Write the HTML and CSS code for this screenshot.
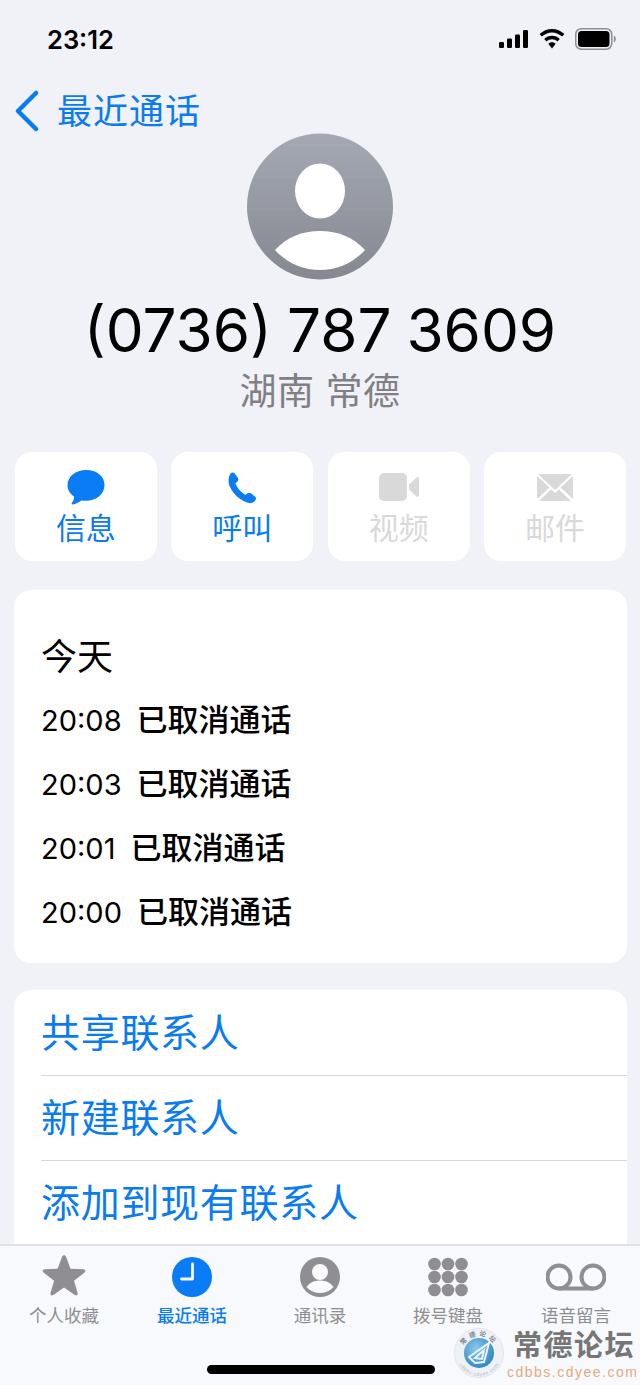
FILE: index.html
```html
<!DOCTYPE html>
<html lang="zh-CN">
<head>
    <meta charset="UTF-8">
    <meta name="viewport" content="width=device-width, initial-scale=1.0">
    <title>最近通话</title>
    <link rel="stylesheet" href="styles.css">
</head>
<body>
    <div class="phone">
        <div class="status-bar">
            <span class="clock">23:12</span>
            <div class="status-icons">
                <svg width="30" height="18" viewBox="0 0 30 18"><rect x="0" y="12" width="5" height="6" rx="1.2"/><rect x="8" y="8.5" width="5" height="9.5" rx="1.2"/><rect x="16" y="4.5" width="5" height="13.5" rx="1.2"/><rect x="24" y="0" width="5" height="18" rx="1.2"/></svg>
                <svg width="26" height="20" viewBox="0 0 26 20"><path d="M13 0C8.2 0 4 1.9 .6 5.1l2.3 2.5C5.7 5 9.1 3.4 13 3.4s7.3 1.6 10.1 4.2l2.3-2.5C22 1.9 17.800 0 13 0z"/><path d="M13 6.700c-3 0-5.700 1.200-7.800 3.200l2.400 2.500c1.500-1.400 3.300-2.200 5.400-2.200s3.900.8 5.400 2.200l2.400-2.500C18.700 7.900 16 6.700 13 6.700z"/><path d="M13 13.300c-1.500 0-2.800.6-3.700 1.500L13 19.500l3.700-4.700c-.9-.9-2.200-1.500-3.700-1.500z"/></svg>
                <svg width="41" height="22" viewBox="0 0 41 22"><rect x=".75" y=".75" width="36" height="20.500" rx="5.500" fill="none" stroke="#8e8e93" stroke-width="1.500"/><rect x="3" y="3" width="31.500" height="16" rx="3.500"/><path d="M38.800 7.500c1.200.4 2 1.900 2 3.500s-.8 3.100-2 3.500z" fill="#8e8e93"/></svg>
            </div>
        </div>

        <div class="nav-row">
            <svg class="chevron" width="26" height="42" viewBox="0 0 26 42"><path d="M22 3 4 21l18 18" fill="none" stroke="#0a7cf0" stroke-width="4.500" stroke-linecap="round" stroke-linejoin="round"/></svg>
            <span class="back-label">最近通话</span>
        </div>

        <div class="contact-head">
            <svg class="avatar" width="146" height="147" viewBox="0 0 146 147">
                <defs>
                    <linearGradient id="avatarFill" x1="0" y1="0" x2="0" y2="1">
                        <stop offset="0" stop-color="#a5a9b3"/>
                        <stop offset="1" stop-color="#858891"/>
                    </linearGradient>
                </defs>
                <circle cx="73" cy="73.500" r="73" fill="url(#avatarFill)"/>
                <ellipse cx="73" cy="58" rx="25" ry="27.500" fill="#fff"/>
                <path d="M28 117C40 104 55 98 73 98S106 104 118 117C106 130 90 137 73 137S40 130 28 117z" fill="#fff"/>
            </svg>
            <h1 class="phone-number">(0736) 787 3609</h1>
            <p class="location">湖南 常德</p>
        </div>

        <div class="actions">
            <div class="action">
                <svg width="40" height="36" viewBox="0 0 40 36"><path d="M20 1C9.500 1 1.500 7.700 1.500 16c0 4.700 2.600 8.800 6.500 11.500.5 2-1 5-2.300 6.800-.4.600 0 1.200.7 1.100 3.100-.5 6.700-2.100 9-4 1.600.3 3 .4 4.600.4 10.500 0 18.500-6.800 18.500-15.800S30.500 1 20 1z" fill="#0a7cf6"/></svg>
                <span>信息</span>
            </div>
            <div class="action">
                <svg width="40" height="36" viewBox="0 0 40 36"><path d="M8.600 4.500c1-1.200 3-1.500 4-.3l3.300 4.800c.8 1.200.6 2.500-.4 3.400l-2.100 1.900c1.700 4.800 5.400 9 10 11.600l2.100-1.600c1.100-.8 2.400-.8 3.400 0l4.300 3.500c1.100 1 1 2.800-.2 4-1.600 1.700-3.600 2.700-5.700 2.200-8-1.800-15.300-8-19.300-16.100C6 14.500 6 8 8.600 4.500z" fill="#0a7cf6"/></svg>
                <span>呼叫</span>
            </div>
            <div class="action off">
                <svg width="42" height="36" viewBox="0 0 42 36"><rect x="1" y="4" width="28" height="28" rx="5" fill="#d9d9d9"/><path d="M31 15.500 38.500 8.500c.9-.8 2.500-.3 2.500 1v17c0 1.300-1.600 1.800-2.500 1L31 20.500z" fill="#d9d9d9"/></svg>
                <span>视频</span>
            </div>
            <div class="action off">
                <svg width="40" height="36" viewBox="0 0 40 36"><path d="M3 5h34L20 21z" fill="#d9d9d9"/><path d="M2 7v23l12.500-11.500zM38 7v23L25.500 18.500zM4 32h32L24 20.500l-4 3.500-4-3.500z" fill="#d9d9d9"/></svg>
                <span>邮件</span>
            </div>
        </div>

        <div class="card calls">
            <div class="calls-day">今天</div>
            <div class="call"><span class="call-time">20:08</span><b>已取消通话</b></div>
            <div class="call"><span class="call-time">20:03</span><b>已取消通话</b></div>
            <div class="call"><span class="call-time">20:01</span><b>已取消通话</b></div>
            <div class="call"><span class="call-time">20:00</span><b>已取消通话</b></div>
        </div>

        <div class="card links">
            <div class="link-row">共享联系人</div>
            <div class="link-row">新建联系人</div>
            <div class="link-row">添加到现有联系人</div>
        </div>

        <div class="tabbar">
            <div class="tab">
                <svg width="46" height="44" viewBox="0 0 46 44"><g transform="translate(1.200 -1.200) scale(.95)"><path d="M23 1.500c1 0 1.700.7 2.200 1.900l4.600 12.400 13.300.5c1.400.1 2.400.6 2.400 1.500 0 .9-.6 1.500-1.600 2.300L33.500 28.300l3.700 12.700c.3 1.200.1 2.300-.6 2.700-.8.400-1.700 0-2.700-.7L23 35.500 12.100 43c-1 .7-1.900 1.100-2.700.7-.7-.4-.9-1.500-.6-2.700l3.700-12.700L2.100 20.100C1.100 19.300.5 18.700.5 17.800c0-.9 1-1.400 2.400-1.500l13.300-.5 4.600-12.400c.5-1.200 1.200-1.900 2.200-1.900z" fill="#8e8e93"/></g></svg>
                <span>个人收藏</span>
            </div>
            <div class="tab active">
                <svg width="46" height="44" viewBox="0 0 46 44"><circle cx="23" cy="22" r="20" fill="#0a7cf6"/><path d="M23.500 9v15H12.500" fill="none" stroke="#f8fafd" stroke-width="2.800" stroke-linecap="round" stroke-linejoin="round"/></svg>
                <span>最近通话</span>
            </div>
            <div class="tab">
                <svg width="46" height="44" viewBox="0 0 46 44"><circle cx="23" cy="22" r="20" fill="#8e8e93"/><circle cx="23" cy="17" r="8" fill="#f8fafd"/><path d="M9.500 32c3-4.500 8-6.500 13.500-6.500S33.500 27.500 36.500 32C33 36 28 38 23 38S13 36 9.500 32z" fill="#f8fafd"/></svg>
                <span>通讯录</span>
            </div>
            <div class="tab">
                <svg width="46" height="44" viewBox="0 0 46 44" fill="#8e8e93"><circle cx="9.500" cy="9" r="6.300"/><circle cx="23" cy="9" r="6.300"/><circle cx="36.500" cy="9" r="6.300"/><circle cx="9.500" cy="22" r="6.300"/><circle cx="23" cy="22" r="6.300"/><circle cx="36.500" cy="22" r="6.300"/><circle cx="9.500" cy="35" r="6.300"/><circle cx="23" cy="35" r="6.300"/><circle cx="36.500" cy="35" r="6.300"/></svg>
                <span>拨号键盘</span>
            </div>
            <div class="tab">
                <svg width="60" height="44" viewBox="0 0 60 44"><path d="M13 33.500h34" stroke="#8e8e93" stroke-width="4"/><circle cx="13" cy="22" r="11.500" fill="none" stroke="#8e8e93" stroke-width="4"/><circle cx="47" cy="22" r="11.500" fill="none" stroke="#8e8e93" stroke-width="4"/></svg>
                <span>语音留言</span>
            </div>
        </div>
        <div class="home-bar"></div>

        <div class="watermark">
            <svg class="wm-logo" width="50" height="50" viewBox="0 0 50 50">
                <defs>
                    <radialGradient id="wmBall" cx=".4" cy=".35" r=".7">
                        <stop offset="0" stop-color="#8cc8ec"/>
                        <stop offset="1" stop-color="#2a84c4"/>
                    </radialGradient>
                    <path id="wmTopArc" d="M8 25a17 17 0 0 1 34 0"/>
                    <path id="wmLowArc" d="M2 25a23 23 0 0 0 46 0"/>
                </defs>
                <circle cx="25" cy="25" r="24.500" fill="#eef1f6" stroke="#e2e5eb"/>
                <circle cx="25" cy="25" r="15" fill="url(#wmBall)"/>
                <path d="M15 29 35 15 30 34 21 35zM21 30l9-8-2 9z" fill="none" stroke="#eef6fb" stroke-width="2"/>
                <text class="wm-ring-top"><textPath href="#wmTopArc" startOffset="50%">常德论坛</textPath></text>
                <text class="wm-ring-low"><textPath href="#wmLowArc" startOffset="50%">cdbbs.cdyee.com</textPath></text>
            </svg>
            <div class="wm-text">
                <div class="wm-title">常德论坛</div>
                <div class="wm-url">cdbbs.cdyee.com</div>
            </div>
        </div>
    </div>
</body>
</html>
```

FILE: styles.css
```css
* {
    box-sizing: border-box;
}
html, body {
    margin: 0;
    padding: 0;
}
body {
    font-family: Inter, "Noto Sans CJK SC", sans-serif;
    background-color: #f2f2f7;
    color: #000;
}
.phone {
    position: relative;
    width: 640px;
    height: 1385px;
    overflow: hidden;
    background-color: #f1f2f7;
}
.status-bar {
    height: 78px;
    padding: 0 24px 0 47px;
    display: flex;
    align-items: center;
    justify-content: space-between;
}
.clock {
    font-size: 25.5px;
    font-weight: 600;
}
.status-icons {
    display: flex;
    align-items: center;
    gap: 10px;
}
.nav-row {
    height: 55px;
    padding: 6px 0 0 14px;
    display: flex;
    align-items: center;
    gap: 17px;
}
.chevron {
    margin-top: 4px;
}
.back-label {
    font-size: 35px;
    color: #0a7cf0;
    letter-spacing: 1px;
}
.contact-head {
    display: flex;
    flex-direction: column;
    align-items: center;
}
.phone-number {
    margin: 15px 0 0;
    font-size: 60.2px;
    line-height: 72px;
    font-weight: 400;
    word-spacing: -2px;
}
.location {
    margin: 1px 0 0;
    font-size: 37px;
    line-height: 48px;
    letter-spacing: .5px;
    color: #808084;
}
.actions {
    margin: 36px 14px 0 15px;
    display: grid;
    grid-template-columns: repeat(4, 1fr);
    gap: 14.67px;
}
.action {
    height: 109px;
    background: #fff;
    border-radius: 17px;
    display: flex;
    flex-direction: column;
    align-items: center;
    padding-top: 17px;
    color: #0a7cf0;
    font-size: 30px;
    line-height: 40px;
}
.action svg {
    margin-bottom: 3px;
}
.action.off {
    color: #d9d9d9;
}
.card {
    background: #fff;
    border-radius: 17px;
    margin: 0 13px 0 14px;
}
.calls {
    margin-top: 29px;
    height: 373px;
    padding: 44px 27px 0;
}
.calls-day {
    font-size: 36px;
    line-height: 46px;
}
.call {
    margin-top: 16px;
    height: 48px;
    display: flex;
    align-items: center;
    gap: 15px;
    font-size: 29px;
}
.call b {
    font-size: 31px;
    line-height: 40px;
    font-weight: 500;
}
.links {
    margin-top: 27px;
    padding: 1px 0 0 27px;
    height: 300px;
}
.link-row {
    height: 85px;
    line-height: 84px;
    font-size: 39px;
    letter-spacing: .7px;
    color: #0a7cf0;
    border-bottom: 1px solid #d8d8dc;
}
.link-row:last-child {
    border-bottom: none;
}
.tabbar {
    position: absolute;
    left: 0;
    right: 0;
    top: 1244px;
    bottom: 0;
    background: #f7f9fc;
    border-top: 2px solid #e2e2e6;
    padding-top: 9px;
    display: flex;
}
.tab {
    width: 128px;
    display: flex;
    flex-direction: column;
    align-items: center;
    font-size: 17.5px;
    line-height: 20px;
    color: #8e8e93;
    gap: 7px;
}
.tab.active {
    color: #0a7cf0;
    font-weight: 500;
}
.home-bar {
    position: absolute;
    left: 207px;
    top: 1365px;
    width: 228px;
    height: 9px;
    border-radius: 5px;
    background: #000;
}
.watermark {
    position: absolute;
    left: 454px;
    top: 1328px;
    display: flex;
    gap: 3px;
    align-items: flex-start;
}
.wm-ring-top {
    font-family: "Noto Sans CJK SC", sans-serif;
    font-size: 6.5px;
    font-weight: 700;
    letter-spacing: 3px;
    text-anchor: middle;
    fill: #7d8794;
}
.wm-ring-low {
    font-family: "Liberation Sans", sans-serif;
    font-size: 5px;
    letter-spacing: .6px;
    text-anchor: middle;
    fill: #b4bcc8;
}
.wm-title {
    margin-left: 6px;
    font-family: "Noto Sans CJK SC", sans-serif;
    font-weight: 700;
    font-size: 29px;
    line-height: 30px;
    letter-spacing: 1.500px;
    color: #767676;
}
.wm-url {
    margin-top: 6px;
    font-family: "Liberation Sans", sans-serif;
    font-size: 14px;
    line-height: 16px;
    letter-spacing: 1.500px;
    color: #e6ab7c;
}
```
